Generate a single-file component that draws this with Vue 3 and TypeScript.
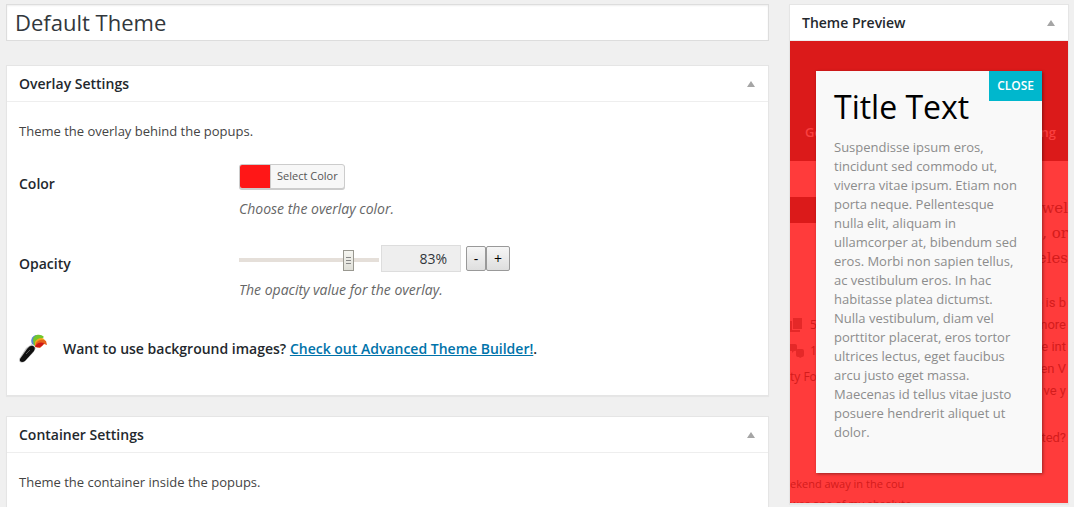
<script setup lang="ts">
import { ref } from 'vue'

const themeName = ref('Default Theme')
const opacity = ref(83)

function step(delta: number) {
  opacity.value = Math.min(100, Math.max(0, Number(opacity.value) + delta))
}

const heroLines: string[] = ['a wel', 's, or', 'eles']
const bodyLines: string[] = ['e is b', 'more', 'e int', 'en V', 've y']
</script>

<template>
  <div class="page">
    <main class="column">
      <input v-model="themeName" class="name-field" type="text" aria-label="Theme name" />

      <section class="panel">
        <header class="panel-head">
          <h2>Overlay Settings</h2>
          <button class="toggle" type="button" aria-label="Toggle Overlay Settings"><i class="arrow"></i></button>
        </header>
        <div class="panel-body">
          <p class="intro">Theme the overlay behind the popups.</p>
          <div class="row">
            <label class="row-label" for="color">Color</label>
            <div class="control">
              <button id="color" class="picker" type="button">
                <span class="swatch"></span><span class="picker-text">Select Color</span>
              </button>
              <p class="hint">Choose the overlay color.</p>
            </div>
          </div>
          <div class="row opacity-row">
            <label class="row-label" for="opacity">Opacity</label>
            <div class="control">
              <div class="slider-line">
                <div class="track">
                  <input id="opacity" v-model.number="opacity" class="range" type="range" min="0" max="100" />
                </div>
                <div class="amount">
                  <input v-model="opacity" class="amount-input" type="text" readonly aria-label="Opacity value" />
                  <span>%</span>
                </div>
                <button class="step" type="button" @click="step(-1)">-</button>
                <button class="step plus" type="button" @click="step(1)">+</button>
              </div>
              <p class="hint">The opacity value for the overlay.</p>
            </div>
          </div>
          <div class="promo">
            <svg class="brush" viewBox="0 0 28 30" aria-hidden="true">
              <path d="M13 10C11 6 13 2 17 1l4 2-4 9z" fill="#5b86cf" />
              <path d="M14 6C14 1 21-1 25 3l-4 3-6 6z" fill="#72c62b" />
              <path d="M16 8c2-4 7-5 9-3l2 3-5 2-6 3z" fill="#f3a51d" />
              <path d="M17 9c3-4 7-4 10-2l1 4-3-1-4 4-5-1z" fill="#e8601c" />
              <path d="M16 12c3-4 6-4 9-3-1 3-4 5-8 4z" fill="#cf1717" />
              <path d="M0 25 7 14l6-4 4 4-3 5-9 9q-3 2-5-1z" fill="#c4c4c4" />
              <path d="M1 25 8 15q3-4 6-3t1 5l-9 10q-3 2-5 0z" fill="#101010" />
              <path d="m7 20 4-4" stroke="#555" stroke-width="1" fill="none" />
            </svg>
            <strong>Want to use background images? <a href="#">Check out Advanced Theme Builder!</a>.</strong>
          </div>
        </div>
      </section>

      <section class="panel tall">
        <header class="panel-head">
          <h2>Container Settings</h2>
          <button class="toggle" type="button" aria-label="Toggle Container Settings"><i class="arrow"></i></button>
        </header>
        <div class="panel-body">
          <p class="intro">Theme the container inside the popups.</p>
        </div>
      </section>
    </main>

    <aside class="panel preview">
      <header class="panel-head">
        <h2>Theme Preview</h2>
        <button class="toggle" type="button" aria-label="Toggle Theme Preview"><i class="arrow"></i></button>
      </header>
      <div class="stage">
        <div class="site" aria-hidden="true">
          <div class="site-nav"><span>Get</span><span>ing</span></div>
          <div class="site-main">
            <div class="site-left">
              <div class="site-bar"></div>
              <div class="site-item">
                <svg viewBox="0 0 14 14"><path d="M0 3h2v9h8v2H0zM3 0h9v11H3z" /></svg>
                <span>5</span>
              </div>
              <div class="site-item">
                <svg viewBox="0 0 14 14"><path d="M0 0h5q2 0 2 2v3q0 2-2 2H4L2 9V7H0zM8 5h4q2 0 2 2v4q0 2-2 2l-2 1-1-1H8q-2 0-2-2V7q0-2 2-2z" /></svg>
                <span>1</span>
              </div>
              <div class="site-caption">ty For</div>
            </div>
            <div class="site-right">
              <div v-for="line in heroLines" :key="line" class="hero-line">{{ line }}</div>
              <div class="site-copy">
                <div v-for="line in bodyLines" :key="line">{{ line }}</div>
              </div>
              <div class="site-question">ted?</div>
            </div>
          </div>
          <div class="site-foot">ekend away in the cou</div>
          <div class="site-foot last">was one of my absolute</div>
        </div>
        <article class="popup">
          <button class="close" type="button">CLOSE</button>
          <h3>Title Text</h3>
          <p>
            Suspendisse ipsum eros, tincidunt sed commodo ut, viverra vitae ipsum. Etiam non porta neque.
            Pellentesque nulla elit, aliquam in ullamcorper at, bibendum sed eros. Morbi non sapien tellus,
            ac vestibulum eros. In hac habitasse platea dictumst. Nulla vestibulum, diam vel porttitor
            placerat, eros tortor ultrices lectus, eget faucibus arcu justo eget massa. Maecenas id tellus
            vitae justo posuere hendrerit aliquet ut dolor.
          </p>
        </article>
      </div>
    </aside>
  </div>
</template>

<style>
body {
  background: #f0f0f0;
}
</style>

<style scoped>
* {
  box-sizing: border-box;
}
.page {
  display: grid;
  grid-template-columns: minmax(0, 1fr) 280px;
  column-gap: 20px;
  align-items: start;
  height: 100vh;
  overflow: hidden;
  padding: 4px 5px 0 6px;
  background: #f0f0f0;
  color: #444;
  font: 13px/20px "Open Sans", "Noto Sans", sans-serif;
}
h2, h3, p {
  margin: 0;
}
button, input {
  font-family: inherit;
}
.name-field {
  display: block;
  width: 100%;
  height: 37px;
  margin-bottom: 24px;
  padding: 0 8px 2px;
  border: 1px solid #ddd;
  box-shadow: inset 0 1px 2px rgba(0, 0, 0, 0.07);
  background: #fff;
  color: #32373c;
  font-size: 22px;
  outline: none;
}
.panel {
  border: 1px solid #e5e5e5;
  background: #fff;
  box-shadow: 0 1px 1px rgba(0, 0, 0, 0.04);
}
.column .panel {
  margin-bottom: 20px;
}
.panel-head {
  display: flex;
  align-items: center;
  justify-content: space-between;
  height: 36px;
  padding: 0 12px;
  border-bottom: 1px solid #eee;
}
h2 {
  color: #23282d;
  font-size: 14px;
  font-weight: 600;
}
.toggle {
  display: flex;
  padding: 0 1px;
  border: 0;
  background: none;
}
.arrow {
  border: 4px solid transparent;
  border-top: 0;
  border-bottom: 6px solid #a5a5a5;
}
.panel-body {
  padding: 19px 12px 31px;
}
.row {
  display: grid;
  grid-template-columns: 220px minmax(0, 1fr);
  margin-top: 23px;
}
.row-label {
  padding-top: 10px;
  color: #23282d;
  font-size: 14px;
  font-weight: 600;
}
.picker {
  display: inline-flex;
  height: 25px;
  padding: 0;
  overflow: hidden;
  border: 1px solid #ccc;
  border-radius: 3px;
  background: #f7f7f7;
  box-shadow: 0 1px 0 #ccc;
  color: #555;
  font-size: 11px;
  line-height: 22px;
  vertical-align: top;
}
.swatch {
  width: 30px;
  height: 23px;
  background: #ff1717;
}
.picker-text {
  padding: 0 6px;
  border-left: 1px solid #ccc;
}
.hint {
  margin-top: 10px;
  color: #666;
  font-size: 14px;
  font-style: italic;
}
.opacity-row {
  margin-top: 26px;
}
.opacity-row .row-label {
  padding-top: 9px;
}
.opacity-row .hint {
  margin-top: 8px;
}
.slider-line {
  display: flex;
  align-items: center;
}
.track {
  width: 140px;
  height: 27px;
  padding-right: 4px;
  background: linear-gradient(#e5dfd9, #e5dfd9) 0 13px / 100% 4px no-repeat;
}
.range {
  display: block;
  width: 100%;
  height: 31px;
  margin: 0;
  appearance: none;
  background: none;
}
.range::-webkit-slider-thumb {
  width: 11px;
  height: 21px;
  appearance: none;
  border: 1px solid #999890;
  background:
    linear-gradient(#888, #888) 2px 6px / 5px 1px no-repeat,
    linear-gradient(#888, #888) 2px 9px / 5px 1px no-repeat,
    linear-gradient(#888, #888) 2px 12px / 5px 1px no-repeat,
    linear-gradient(#f5f5f0, #dfdfd8);
}
.amount {
  display: flex;
  align-items: center;
  width: 80px;
  height: 27px;
  margin-left: 2px;
  padding-right: 13px;
  border: 1px solid #ddd;
  background: #eee;
  font-size: 14px;
  color: #32373c;
}
.amount-input {
  flex: 1;
  min-width: 0;
  padding: 0;
  border: 0;
  background: none;
  color: inherit;
  font-size: 14px;
  text-align: right;
}
.step {
  width: 20px;
  height: 25px;
  margin-left: 5px;
  padding: 0;
  border: 1px solid #999;
  border-radius: 2px;
  background: linear-gradient(#f6f6f6, #dedede);
  color: #000;
  font-size: 14px;
}
.plus {
  width: 24px;
  margin-left: 0;
}
.promo {
  display: flex;
  align-items: center;
  gap: 16px;
  margin-top: 34px;
  color: #23282d;
  font-size: 14px;
}
.brush {
  width: 28px;
  height: 30px;
}
strong {
  font-weight: 600;
}
a {
  color: #0073aa;
}
.tall {
  min-height: 200px;
}
.stage {
  position: relative;
  padding: 30px 26px;
  background: #ff3b3b;
}
.site {
  position: absolute;
  inset: 0;
  overflow: hidden;
  color: #d41c1c;
  white-space: nowrap;
}
.site-nav {
  display: flex;
  justify-content: space-between;
  height: 120px;
  padding: 81px 12px 0 15px;
  background: #db1a1a;
  color: #fa4040;
  font-weight: 600;
}
.site-main {
  display: flex;
  justify-content: space-between;
  height: 313px;
}
.site-left {
  padding-top: 36px;
}
.site-bar {
  width: 100px;
  height: 26px;
  margin-bottom: 89px;
  background: #db1a1a;
}
.site-item {
  display: flex;
  align-items: center;
  gap: 6px;
  height: 26px;
  font-size: 12px;
}
.site-item svg {
  width: 14px;
  height: 14px;
  fill: #e52828;
}
.site-caption {
  height: 26px;
  font-size: 12px;
  line-height: 26px;
}
.site-right {
  padding-top: 35px;
  text-align: right;
}
.hero-line {
  font: 15px/25px "DejaVu Serif", serif;
}
.site-copy, .site-question {
  padding-right: 2px;
  font: 13px/22px Roboto, "Liberation Sans", sans-serif;
}
.site-copy {
  margin-top: 21px;
}
.site-question {
  margin-top: 25px;
}
.site-foot {
  font-size: 11px;
}
.popup {
  position: relative;
  padding: 18px 18px 31px;
  background: #f9f9f9;
  box-shadow: 1px 1px 3px rgba(2, 2, 2, 0.4);
}
.popup h3 {
  margin-bottom: 13px;
  color: #000;
  font: 32px/36px "Open Sans", sans-serif;
}
.popup p {
  color: #8c8c8c;
  font: 13px/19px "Open Sans", sans-serif;
}
.close {
  position: absolute;
  top: 0;
  right: 0;
  height: 30px;
  padding: 0 8px;
  border: 0;
  background: #00b7cd;
  color: #fff;
  font: 600 12px/30px "Open Sans", sans-serif;
}
</style>
